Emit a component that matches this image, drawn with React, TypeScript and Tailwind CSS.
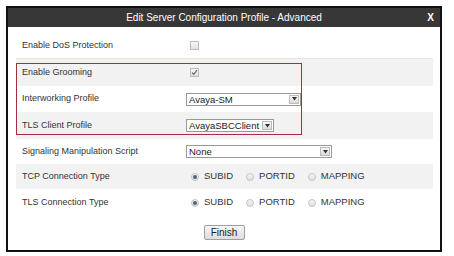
import React from 'react';

const font = { fontFamily: '"Liberation Sans", Arial, sans-serif' };

function Checkbox({ checked }: { checked?: boolean }) {
  return (
    <div className="ml-1 flex h-[9px] w-[9px] items-center justify-center border border-[#bdbdbd] bg-gradient-to-b from-[#f6f6f6] to-[#e2e2e2]">
      {checked && (
        <svg width="7" height="7" viewBox="0 0 7 7">
          <path d="M1 3.6 L2.8 5.4 L6 1.2" fill="none" stroke="#666" strokeWidth="1.1" />
        </svg>
      )}
    </div>
  );
}

function Select({ value, width }: { value: string; width: string }) {
  return (
    <div className={`flex h-[13px] items-stretch border border-[#999] bg-white ${width}`}>
      <span className="flex-1 pl-[2px] text-[9.5px] leading-[11px] text-[#1a1a1a]">{value}</span>
      <span className="m-[1px] flex w-[10px] items-center justify-center border border-[#bbb] bg-gradient-to-b from-[#f7f7f7] to-[#dcdcdc]">
        <svg width="5" height="4" viewBox="0 0 5 4">
          <path d="M0 0 H5 L2.5 3.5 Z" fill="#333" />
        </svg>
      </span>
    </div>
  );
}

function Radio({ checked, label }: { checked?: boolean; label: string }) {
  return (
    <div className="flex items-center gap-[5px]">
      <div className="flex h-[8px] w-[8px] items-center justify-center rounded-full border border-[#c4c4c4] bg-gradient-to-b from-[#f4f4f4] to-[#e0e0e0]">
        {checked && <div className="h-[4px] w-[4px] rounded-full bg-[#4a6482]" />}
      </div>
      <span className="text-[9.5px] text-[#333]">{label}</span>
    </div>
  );
}

function Radios() {
  return (
    <div className="ml-[5px] flex items-center gap-[13px]">
      <Radio checked label="SUBID" />
      <Radio label="PORTID" />
      <Radio label="MAPPING" />
    </div>
  );
}

const rows: { label: string; h: string; gray?: boolean; line?: boolean; control: React.ReactNode }[] = [
  { label: 'Enable DoS Protection', h: 'h-[26px]', line: true, control: <Checkbox /> },
  { label: 'Enable Grooming', h: 'h-[27px]', gray: true, control: <Checkbox checked /> },
  { label: 'Interworking Profile', h: 'h-[26px]', control: <Select value="Avaya-SM" width="w-[115px]" /> },
  { label: 'TLS Client Profile', h: 'h-[27px]', gray: true, control: <Select value="AvayaSBCClient" width="w-[88px]" /> },
  { label: 'Signaling Manipulation Script', h: 'h-[25px]', control: <Select value="None" width="w-[146px]" /> },
  { label: 'TCP Connection Type', h: 'h-[25px]', gray: true, control: <Radios /> },
  { label: 'TLS Connection Type', h: 'h-[27px]', control: <Radios /> },
];

export default function App() {
  return (
    <div className="h-[256px] w-[454px] bg-white pl-[6px] pt-[6px]" style={font}>
      <div className="flex h-[246px] w-[436px] flex-col border-2 border-[#111] bg-white">
        <div className="relative flex h-[19px] items-center justify-center bg-[#373737]">
          <span className="text-[10px] text-white">Edit Server Configuration Profile - Advanced</span>
          <span className="absolute right-[6px] text-[10px] font-bold text-white">X</span>
        </div>
        <div className="relative mt-[6px] pl-[8px] pr-[7px]">
          {rows.map((r) => (
            <div
              key={r.label}
              className={`flex items-center ${r.h} ${r.gray ? 'bg-[#f2f2f2]' : ''} ${r.line ? 'border-b border-[#e6e6e6]' : ''}`}
            >
              <span className="w-[170px] pl-[6px] text-[9px] text-[#333]">{r.label}</span>
              {r.control}
            </div>
          ))}
          <div className="absolute left-[8px] top-[30px] h-[72px] w-[286px] border-[1.5px] border-[#a3303c]" />
        </div>
        <div className="mt-[9px] flex justify-center">
          <button className="h-[15px] w-[41px] rounded-[2px] border border-[#a0a0a0] bg-gradient-to-b from-[#f6f6f6] to-[#dddddd] text-[10px] leading-[13px] text-[#222]">
            Finish
          </button>
        </div>
      </div>
    </div>
  );
}
